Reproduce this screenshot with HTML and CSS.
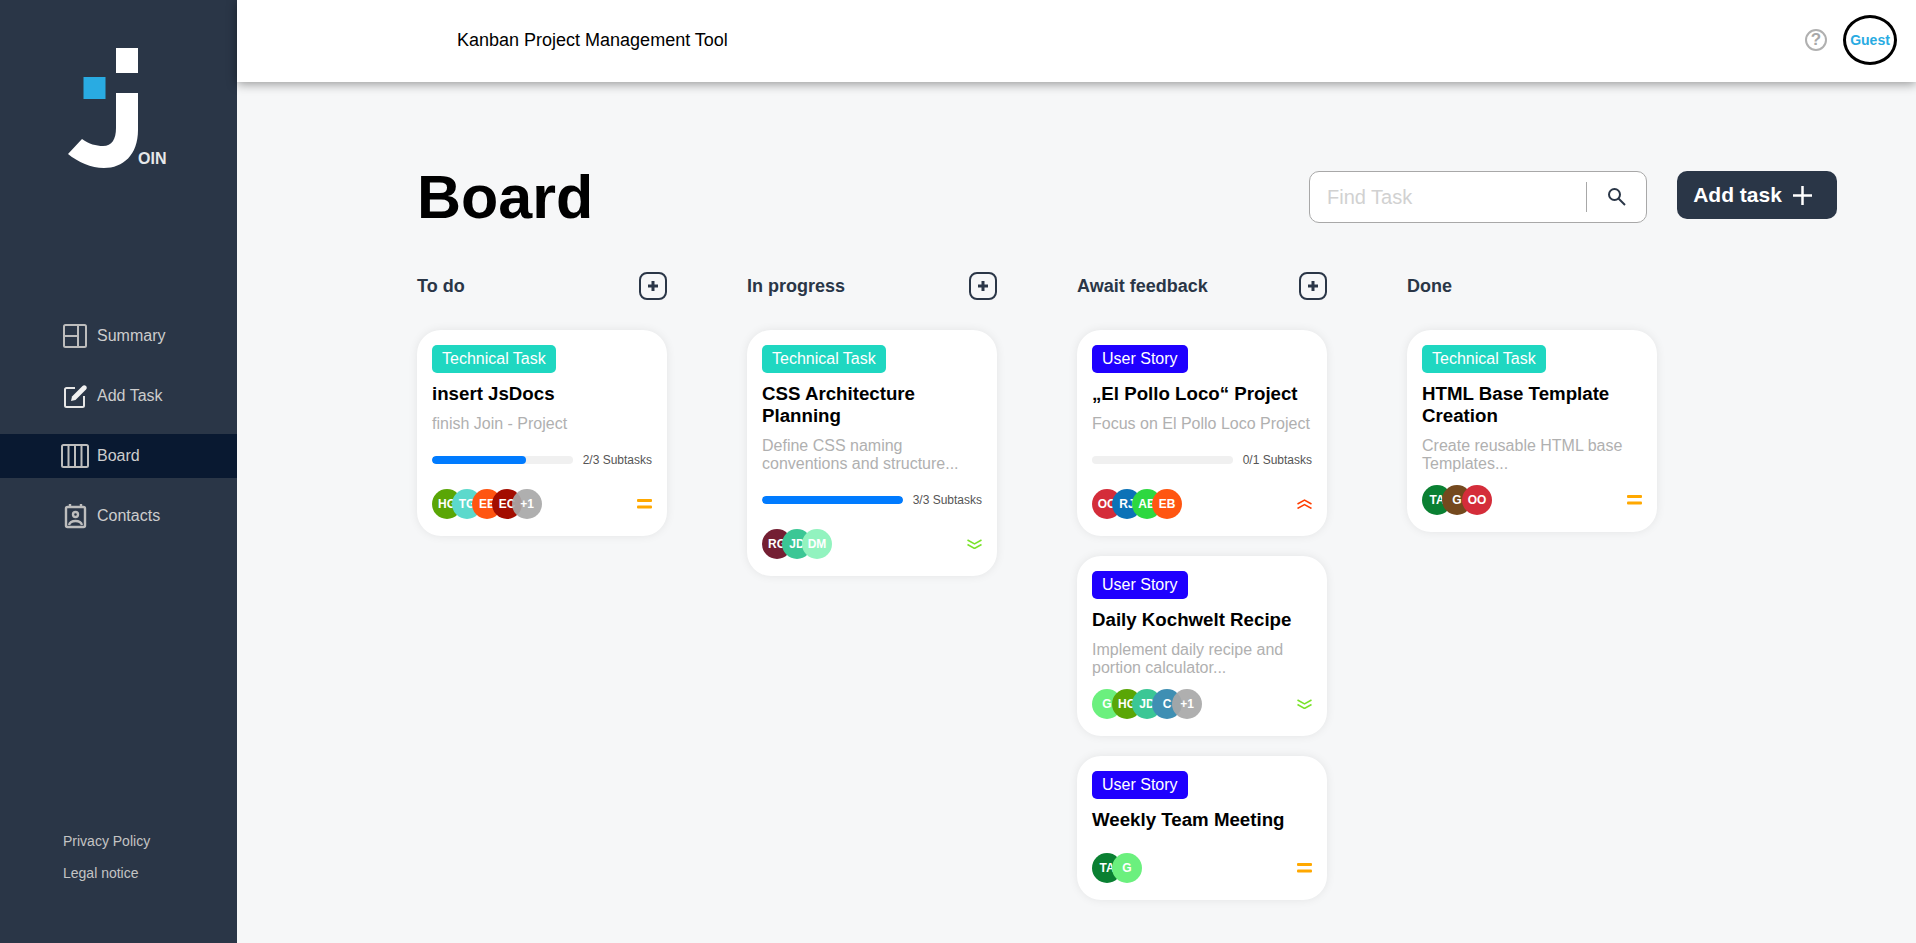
FILE: index.html
```html
<!DOCTYPE html>
<html lang="en">
<head>
<meta charset="utf-8">
<title>Join - Board</title>
<link rel="stylesheet" href="styles.css">
</head>
<body>
<aside class="sidebar">
  <div class="logo">
    <svg class="logo-mark" width="72" height="120" viewBox="0 0 72 120">
      <rect x="48" y="0" width="22" height="25" fill="#fff"/>
      <rect x="15.500" y="29" width="22" height="22" fill="#29abe2"/>
      <path d="M48 45 H70 V82 C70 107 55 120 36 120 C23 120 10 114 0 106 L14 91 C21 96 28 98 35 98 C44 98 48 91 48 80 Z" fill="#fff"/>
    </svg>
    <span class="logo-text">OIN</span>
  </div>
  <nav class="nav">
    <a class="nav-item"><span class="nav-icon">
      <svg width="24" height="24" viewBox="0 0 24 24" fill="none" stroke="#bdbdbd" stroke-width="2"><rect x="1" y="1" width="22" height="22" rx="1.500"/><path d="M15 1V23M1 12H15"/></svg>
    </span>Summary</a>
    <a class="nav-item"><span class="nav-icon">
      <svg width="24" height="24" viewBox="0 0 24 24" fill="none"><path d="M12 4H3.500A1.500 1.500 0 0 0 2 5.500V21.500A1.500 1.500 0 0 0 3.500 23H19.500A1.500 1.500 0 0 0 21 21.500V12" stroke="#e6e6e6" stroke-width="2"/><path d="M8 17L9 12.500L19.500 2C20.500 1 22 1 23 2C24 3 24 4.500 23 5.500L12.500 16Z" fill="#f2f2f2"/></svg>
    </span>Add Task</a>
    <a class="nav-item active"><span class="nav-icon">
      <svg width="28" height="24" viewBox="0 0 28 24" fill="none" stroke="#bdbdbd" stroke-width="2"><rect x="1" y="1" width="26" height="22" rx="1.500"/><path d="M7.500 1V23M14 1V23M20.500 1V23"/></svg>
    </span>Board</a>
    <a class="nav-item"><span class="nav-icon">
      <svg width="24" height="26" viewBox="0 0 24 26" fill="none" stroke="#bdbdbd" stroke-width="2.400"><rect x="3" y="4" width="19" height="20" rx="1.500"/><path d="M7 1V5M18 1V5"/><circle cx="12.500" cy="11.500" r="2.500"/><path d="M6 22C7 18.500 9.500 18 12.500 18C15.500 18 18 18.500 19 22"/></svg>
    </span>Contacts</a>
  </nav>
  <div class="legal">
    <a class="legal-link">Privacy Policy</a>
    <a class="legal-link">Legal notice</a>
  </div>
</aside>

<div class="main">
  <header class="topbar">
    <span class="topbar-title">Kanban Project Management Tool</span>
    <div class="topbar-right">
      <span class="help">?</span>
      <span class="guest">Guest</span>
    </div>
  </header>

  <section class="content">
    <div class="board-head">
      <h1 class="board-title">Board</h1>
      <div class="board-actions">
        <div class="search">
          <span class="search-text">Find Task</span>
          <span class="search-divider"></span>
          <svg class="search-icon" width="20" height="20" viewBox="0 0 20 20" fill="none" stroke="#2a3647" stroke-width="2"><circle cx="7.500" cy="7.500" r="5.500"/><path d="M11.500 11.500L18 18"/></svg>
        </div>
        <button class="add-btn">Add task
          <svg width="21" height="21" viewBox="0 0 21 21" stroke="#fff" stroke-width="2.500"><path d="M10.500 1V20M1 10.500H20"/></svg>
        </button>
      </div>
    </div>

    <div class="columns">
      <div class="column">
        <div class="col-head"><span class="col-title">To do</span><span class="col-add"><svg width="10" height="10" viewBox="0 0 10 10" stroke="#2a3647" stroke-width="3"><path d="M5 0V10M0 5H10"/></svg></span></div>
        <div class="cards">
          <article class="card">
            <span class="tag tech">Technical Task</span>
            <h2 class="card-title">insert JsDocs</h2>
            <p class="card-desc">finish Join - Project</p>
            <div class="progress"><span class="bar"><span class="fill" style="width:66.67%"></span></span><span class="sub">2/3 Subtasks</span></div>
            <div class="card-foot">
              <div class="avatars">
                <span class="av c-hg"><span>HG</span></span><span class="av c-tg"><span>TG</span></span><span class="av c-ee"><span>EE</span></span><span class="av c-ec"><span>EC</span></span><span class="av more"><span>+1</span></span>
              </div>
              <svg class="prio" width="15" height="10" viewBox="0 0 15 10" fill="#ffa800"><rect y="0" width="15" height="3" rx="1"/><rect y="6.500" width="15" height="3" rx="1"/></svg>
            </div>
          </article>
        </div>
      </div>

      <div class="column">
        <div class="col-head"><span class="col-title">In progress</span><span class="col-add"><svg width="10" height="10" viewBox="0 0 10 10" stroke="#2a3647" stroke-width="3"><path d="M5 0V10M0 5H10"/></svg></span></div>
        <div class="cards">
          <article class="card">
            <span class="tag tech">Technical Task</span>
            <h2 class="card-title">CSS Architecture Planning</h2>
            <p class="card-desc">Define CSS naming conventions and structure...</p>
            <div class="progress"><span class="bar"><span class="fill" style="width:100%"></span></span><span class="sub">3/3 Subtasks</span></div>
            <div class="card-foot">
              <div class="avatars">
                <span class="av c-rg"><span>RG</span></span><span class="av c-jd"><span>JD</span></span><span class="av c-dm"><span>DM</span></span>
              </div>
              <svg class="prio" width="15" height="10" viewBox="0 0 15 10" fill="none" stroke="#7ae229" stroke-width="1.500"><path d="M0.500 1L7.500 5L14.500 1M0.500 5.500L7.500 9.500L14.500 5.500"/></svg>
            </div>
          </article>
        </div>
      </div>

      <div class="column">
        <div class="col-head"><span class="col-title">Await feedback</span><span class="col-add"><svg width="10" height="10" viewBox="0 0 10 10" stroke="#2a3647" stroke-width="3"><path d="M5 0V10M0 5H10"/></svg></span></div>
        <div class="cards">
          <article class="card">
            <span class="tag story">User Story</span>
            <h2 class="card-title">„El Pollo Loco“ Project</h2>
            <p class="card-desc">Focus on El Pollo Loco Project</p>
            <div class="progress"><span class="bar"><span class="fill" style="width:0%"></span></span><span class="sub">0/1 Subtasks</span></div>
            <div class="card-foot">
              <div class="avatars">
                <span class="av c-oo"><span>OO</span></span><span class="av c-rj"><span>RJ</span></span><span class="av c-ab"><span>AB</span></span><span class="av c-ee"><span>EB</span></span>
              </div>
              <svg class="prio" width="15" height="10" viewBox="0 0 15 10" fill="none" stroke="#ff3d00" stroke-width="1.500"><path d="M0.500 5L7.500 1L14.500 5M0.500 9.500L7.500 5.500L14.500 9.500"/></svg>
            </div>
          </article>
          <article class="card">
            <span class="tag story">User Story</span>
            <h2 class="card-title">Daily Kochwelt Recipe</h2>
            <p class="card-desc">Implement daily recipe and portion calculator...</p>
            <div class="card-foot">
              <div class="avatars">
                <span class="av c-g"><span>G</span></span><span class="av c-hg"><span>HG</span></span><span class="av c-jd"><span>JD</span></span><span class="av c-c"><span>C</span></span><span class="av more"><span>+1</span></span>
              </div>
              <svg class="prio" width="15" height="10" viewBox="0 0 15 10" fill="none" stroke="#7ae229" stroke-width="1.500"><path d="M0.500 1L7.500 5L14.500 1M0.500 5.500L7.500 9.500L14.500 5.500"/></svg>
            </div>
          </article>
          <article class="card">
            <span class="tag story">User Story</span>
            <h2 class="card-title">Weekly Team Meeting</h2>
            <p class="card-desc"></p>
            <div class="card-foot">
              <div class="avatars">
                <span class="av c-ta"><span>TA</span></span><span class="av c-g"><span>G</span></span>
              </div>
              <svg class="prio" width="15" height="10" viewBox="0 0 15 10" fill="#ffa800"><rect y="0" width="15" height="3" rx="1"/><rect y="6.500" width="15" height="3" rx="1"/></svg>
            </div>
          </article>
        </div>
      </div>

      <div class="column">
        <div class="col-head"><span class="col-title">Done</span></div>
        <div class="cards">
          <article class="card">
            <span class="tag tech">Technical Task</span>
            <h2 class="card-title">HTML Base Template Creation</h2>
            <p class="card-desc">Create reusable HTML base Templates...</p>
            <div class="card-foot">
              <div class="avatars">
                <span class="av c-ta"><span>TA</span></span><span class="av c-gb"><span>G</span></span><span class="av c-oo"><span>OO</span></span>
              </div>
              <svg class="prio" width="15" height="10" viewBox="0 0 15 10" fill="#ffa800"><rect y="0" width="15" height="3" rx="1"/><rect y="6.500" width="15" height="3" rx="1"/></svg>
            </div>
          </article>
        </div>
      </div>
    </div>
  </section>
</div>
</body>
</html>
```
FILE: styles.css
```css
* { box-sizing: border-box; }
html, body { height: 100%; }
body {
  margin: 0;
  display: flex;
  background: #f6f7f8;
  font-family: "Liberation Sans", Arial, sans-serif;
  overflow: hidden;
}
.sidebar {
  width: 237px;
  flex: none;
  height: 943px;
  background: #2a3647;
  display: flex;
  flex-direction: column;
  padding-top: 48px;
}
.logo { position: relative; height: 120px; margin-left: 68px; }
.logo-mark { display: block; }
.logo-text {
  position: absolute;
  left: 70px;
  top: 101px;
  color: #e6e8ea;
  font: 700 16px/20px "Liberation Sans", Arial, sans-serif;
}
.nav { margin-top: 146px; display: flex; flex-direction: column; gap: 16px; }
.nav-item {
  height: 44px;
  display: flex;
  align-items: center;
  color: #cdcdcd;
  font-size: 16px;
}
.nav-item.active { background: #091931; }
.nav-icon {
  width: 97px;
  padding-left: 61px;
  display: flex;
  justify-content: center;
  padding-right: 8px;
}
.legal {
  margin-top: auto;
  padding: 0 0 62px 63px;
  display: flex;
  flex-direction: column;
  gap: 16px;
}
.legal-link { color: #c4c4c4; font-size: 14px; line-height: 16px; }

.main { flex: 1; min-width: 0; }
.topbar {
  position: relative;
  height: 82px;
  background: #fff;
  box-shadow: 0 2px 10px rgba(0, 0, 0, 0.4);
  display: flex;
  align-items: center;
  justify-content: space-between;
  padding: 0 19px 2px 220px;
}
.topbar-title { font-size: 18px; color: #000; }
.topbar-right { display: flex; align-items: center; gap: 16px; }
.help {
  width: 22px;
  height: 22px;
  border: 2px solid #b0b0b0;
  border-radius: 50%;
  color: #a8a8a8;
  font-size: 17px;
  font-weight: 700;
  display: flex;
  align-items: center;
  justify-content: center;
}
.guest {
  width: 54px;
  height: 50px;
  border: 3px solid #000;
  border-radius: 50%;
  color: #29abe2;
  font-size: 14px;
  font-weight: 700;
  display: flex;
  align-items: center;
  justify-content: center;
}
.content { padding: 89px 79px 0 180px; }
.board-head { display: flex; justify-content: space-between; align-items: flex-start; }
.board-title { margin: 0; font-size: 61px; line-height: 52px; font-weight: 700; color: #000; }
.board-actions { display: flex; gap: 30px; align-items: flex-start; }
.search {
  width: 338px;
  height: 52px;
  background: #fff;
  border: 1px solid #a8a8a8;
  border-radius: 10px;
  display: flex;
  align-items: center;
  padding-left: 17px;
}
.search-text { flex: 1; color: #d1d1d1; font-size: 20px; }
.search-divider { width: 1px; height: 30px; background: #a8a8a8; }
.search-icon { margin: 0 19px 0 20px; }
.add-btn {
  width: 160px;
  height: 48px;
  border: 0;
  border-radius: 10px;
  background: #2a3647;
  color: #fff;
  font: 700 21px "Liberation Sans", Arial, sans-serif;
  display: flex;
  align-items: center;
  justify-content: center;
  gap: 10px;
  padding: 0 8px 0 0;
}
.columns { display: flex; gap: 80px; margin-top: 49px; }
.column { width: 250px; }
.col-head { height: 28px; display: flex; align-items: center; justify-content: space-between; }
.col-title { font-size: 18px; font-weight: 700; color: #2a3647; }
.col-add {
  width: 28px;
  height: 28px;
  border: 2px solid #2a3647;
  border-radius: 8px;
  display: flex;
  align-items: center;
  justify-content: center;
}
.cards { margin-top: 30px; display: flex; flex-direction: column; gap: 20px; }
.card {
  background: #fff;
  border-radius: 24px;
  box-shadow: 0 0 10px rgba(0, 0, 0, 0.08);
  padding: 15px 15px 17px;
  display: flex;
  flex-direction: column;
  align-items: flex-start;
}
.tag {
  height: 28px;
  padding: 0 10px;
  border-radius: 5px;
  color: #fff;
  font-size: 16px;
  line-height: 28px;
}
.tech { background: #1fd7c1; }
.story { background: #1f00ff; }
.card-title { margin: 10px 0 0; font-size: 18.700px; line-height: 22px; font-weight: 700; color: #000; }
.card-desc { margin: 10px 0 0; min-height: 0; font-size: 16px; line-height: 18px; color: #b0b0b0; }
.progress {
  width: 100%;
  height: 14px;
  margin-top: 20px;
  margin-bottom: 10px;
  display: flex;
  align-items: center;
  justify-content: space-between;
}
.bar { width: 141px; height: 8px; border-radius: 8px; background: #f0f0f0; overflow: hidden; display: block; }
.fill { display: block; height: 100%; background: #007bff; border-radius: 8px; }
.sub { font-size: 12px; color: #555; }
.card-foot { width: 100%; margin-top: 12px; display: flex; align-items: center; justify-content: space-between; }
.avatars { display: flex; }
.av {
  width: 30px;
  height: 30px;
  border-radius: 50%;
  margin-right: -10px;
  color: #fff;
  font: 700 12px/30px "Liberation Sans", Arial, sans-serif;
  text-align: center;
  position: relative;
}
.c-hg { background: #5aa606; }
.c-tg { background: #5cd9cc; }
.c-ee { background: #ff5511; }
.c-ec { background: #a30d00; }
.c-rg { background: #741f33; }
.c-jd { background: #3bc795; }
.c-dm { background: #92f3bf; }
.c-oo { background: #d42d3a; }
.c-rj { background: #0c72b7; }
.c-ab { background: #2dd840; }
.c-g { background: #6bf07e; }
.c-c { background: #3f8fb3; }
.c-ta { background: #0a8032; }
.c-gb { background: #74491e; }
.more { background: rgba(168, 168, 168, 0.92); }
.prio { display: block; }
```
